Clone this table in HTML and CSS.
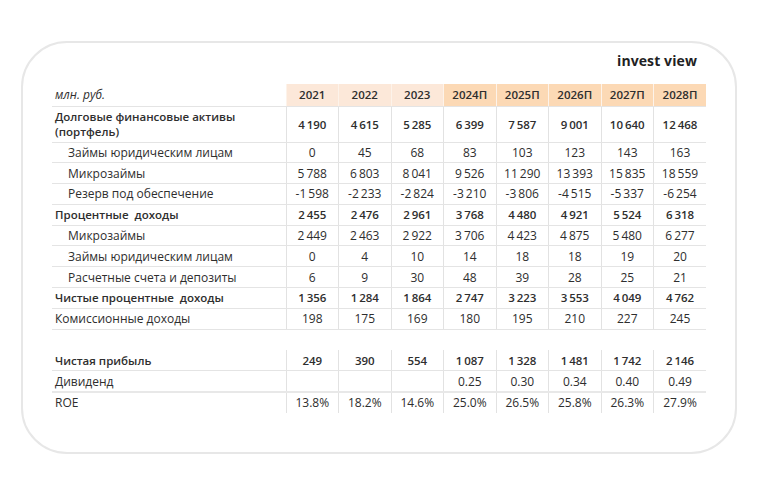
FILE: index.html
```html
<!DOCTYPE html>
<html lang="ru">
<head>
<meta charset="utf-8">
<title>invest view</title>
<link rel="stylesheet" href="styles.css">
</head>
<body>
<div class="card">
  <div class="logo">invest view</div>
  <table class="fin">
    <colgroup>
      <col class="c-label">
      <col class="c-year"><col class="c-year"><col class="c-year"><col class="c-year">
      <col class="c-year"><col class="c-year"><col class="c-year"><col class="c-year">
    </colgroup>
    <thead>
      <tr class="head">
        <th class="lbl unit">млн. руб.</th>
        <th class="fact">2021</th><th class="fact">2022</th><th class="fact">2023</th>
        <th class="fc">2024П</th><th class="fc">2025П</th><th class="fc">2026П</th><th class="fc">2027П</th><th class="fc">2028П</th>
      </tr>
    </thead>
    <tbody>
      <tr class="b tall">
        <td class="lbl">Долговые финансовые активы<br>(портфель)</td>
        <td>4&#8201;190</td><td>4&#8201;615</td><td>5&#8201;285</td><td>6&#8201;399</td><td>7&#8201;587</td><td>9&#8201;001</td><td>10&#8201;640</td><td>12&#8201;468</td>
      </tr>
      <tr class="sub">
        <td class="lbl">Займы юридическим лицам</td>
        <td>0</td><td>45</td><td>68</td><td>83</td><td>103</td><td>123</td><td>143</td><td>163</td>
      </tr>
      <tr class="sub">
        <td class="lbl">Микрозаймы</td>
        <td>5&#8201;788</td><td>6&#8201;803</td><td>8&#8201;041</td><td>9&#8201;526</td><td>11&#8201;290</td><td>13&#8201;393</td><td>15&#8201;835</td><td>18&#8201;559</td>
      </tr>
      <tr class="sub">
        <td class="lbl">Резерв под обеспечение</td>
        <td>-1&#8201;598</td><td>-2&#8201;233</td><td>-2&#8201;824</td><td>-3&#8201;210</td><td>-3&#8201;806</td><td>-4&#8201;515</td><td>-5&#8201;337</td><td>-6&#8201;254</td>
      </tr>
      <tr class="b">
        <td class="lbl">Процентные&nbsp; доходы</td>
        <td>2&#8201;455</td><td>2&#8201;476</td><td>2&#8201;961</td><td>3&#8201;768</td><td>4&#8201;480</td><td>4&#8201;921</td><td>5&#8201;524</td><td>6&#8201;318</td>
      </tr>
      <tr class="sub">
        <td class="lbl">Микрозаймы</td>
        <td>2&#8201;449</td><td>2&#8201;463</td><td>2&#8201;922</td><td>3&#8201;706</td><td>4&#8201;423</td><td>4&#8201;875</td><td>5&#8201;480</td><td>6&#8201;277</td>
      </tr>
      <tr class="sub">
        <td class="lbl">Займы юридическим лицам</td>
        <td>0</td><td>4</td><td>10</td><td>14</td><td>18</td><td>18</td><td>19</td><td>20</td>
      </tr>
      <tr class="sub">
        <td class="lbl">Расчетные счета и депозиты</td>
        <td>6</td><td>9</td><td>30</td><td>48</td><td>39</td><td>28</td><td>25</td><td>21</td>
      </tr>
      <tr class="b">
        <td class="lbl">Чистые процентные&nbsp; доходы</td>
        <td>1&#8201;356</td><td>1&#8201;284</td><td>1&#8201;864</td><td>2&#8201;747</td><td>3&#8201;223</td><td>3&#8201;553</td><td>4&#8201;049</td><td>4&#8201;762</td>
      </tr>
      <tr>
        <td class="lbl">Комиссионные доходы</td>
        <td>198</td><td>175</td><td>169</td><td>180</td><td>195</td><td>210</td><td>227</td><td>245</td>
      </tr>
      <tr class="gap">
        <td class="lbl"></td><td></td><td></td><td></td><td></td><td></td><td></td><td></td><td></td>
      </tr>
      <tr class="b">
        <td class="lbl">Чистая прибыль</td>
        <td>249</td><td>390</td><td>554</td><td>1&#8201;087</td><td>1&#8201;328</td><td>1&#8201;481</td><td>1&#8201;742</td><td>2&#8201;146</td>
      </tr>
      <tr class="thick">
        <td class="lbl">Дивиденд</td>
        <td></td><td></td><td></td><td>0.25</td><td>0.30</td><td>0.34</td><td>0.40</td><td>0.49</td>
      </tr>
      <tr class="last">
        <td class="lbl">ROE</td>
        <td>13.8%</td><td>18.2%</td><td>14.6%</td><td>25.0%</td><td>26.5%</td><td>25.8%</td><td>26.3%</td><td>27.9%</td>
      </tr>
    </tbody>
  </table>
</div>
</body>
</html>
```
FILE: styles.css
```css
html, body {
  margin: 0;
  padding: 0;
  background: #ffffff;
}

body {
  font-family: "Open Sans", "Liberation Sans", sans-serif;
  color: #2e2e2e;
}

.card {
  box-sizing: border-box;
  width: 716px;
  height: 413px;
  margin: 41px 0 0 21px;
  border: 2px solid #e7e7e7;
  border-radius: 46px;
  padding: 8px 38px 0 29px;
}

.logo {
  text-align: right;
  font-weight: 700;
  font-size: 14px;
  line-height: 20px;
  height: 20px;
  color: #1f1f24;
  margin-bottom: 13px;
  letter-spacing: 0.1px;
}

.fin {
  border-collapse: collapse;
  table-layout: fixed;
  width: 654px;
  font-size: 12px;
  line-height: 15px;
}

.c-label { width: 234px; }
.c-year { width: 52.5px; }

.fin th,
.fin td {
  padding: 0;
  text-align: center;
  vertical-align: middle;
  font-weight: 400;
  border-left: 1px solid #e2e2e2;
  border-bottom: 1px solid #e4e4e4;
  white-space: nowrap;
}

.fin .lbl {
  text-align: left;
  padding-left: 3px;
  border-left: none;
}

.head {
  height: 22px;
}

.head th {
  font-weight: 600;
  font-size: 11.5px;
  border-left: 1px solid #fdf3ea;
  border-bottom: 1px solid #e4e4e4;
}

.head .unit {
  font-style: italic;
  font-weight: 400;
  font-size: 12px;
  background: transparent;
}

.head .fact {
  background: #fce8d9;
}

.head .fc {
  background: #fcd9b5;
}

.fin tbody tr {
  height: 20.8px;
}

.fin tbody tr.tall {
  height: 36px;
}

.fin tr.b td {
  font-weight: 600;
  font-size: 11.5px;
}

.fin tr.sub .lbl {
  padding-left: 16px;
}

.fin tr.gap {
  height: 21px;
}

.fin tr.gap td {
  border-left: none;
  border-bottom: none;
}

.fin tr.thick td {
  border-bottom: 2px solid #e8e8e8;
}

.fin tr.last td {
  border-bottom: none;
}
```
